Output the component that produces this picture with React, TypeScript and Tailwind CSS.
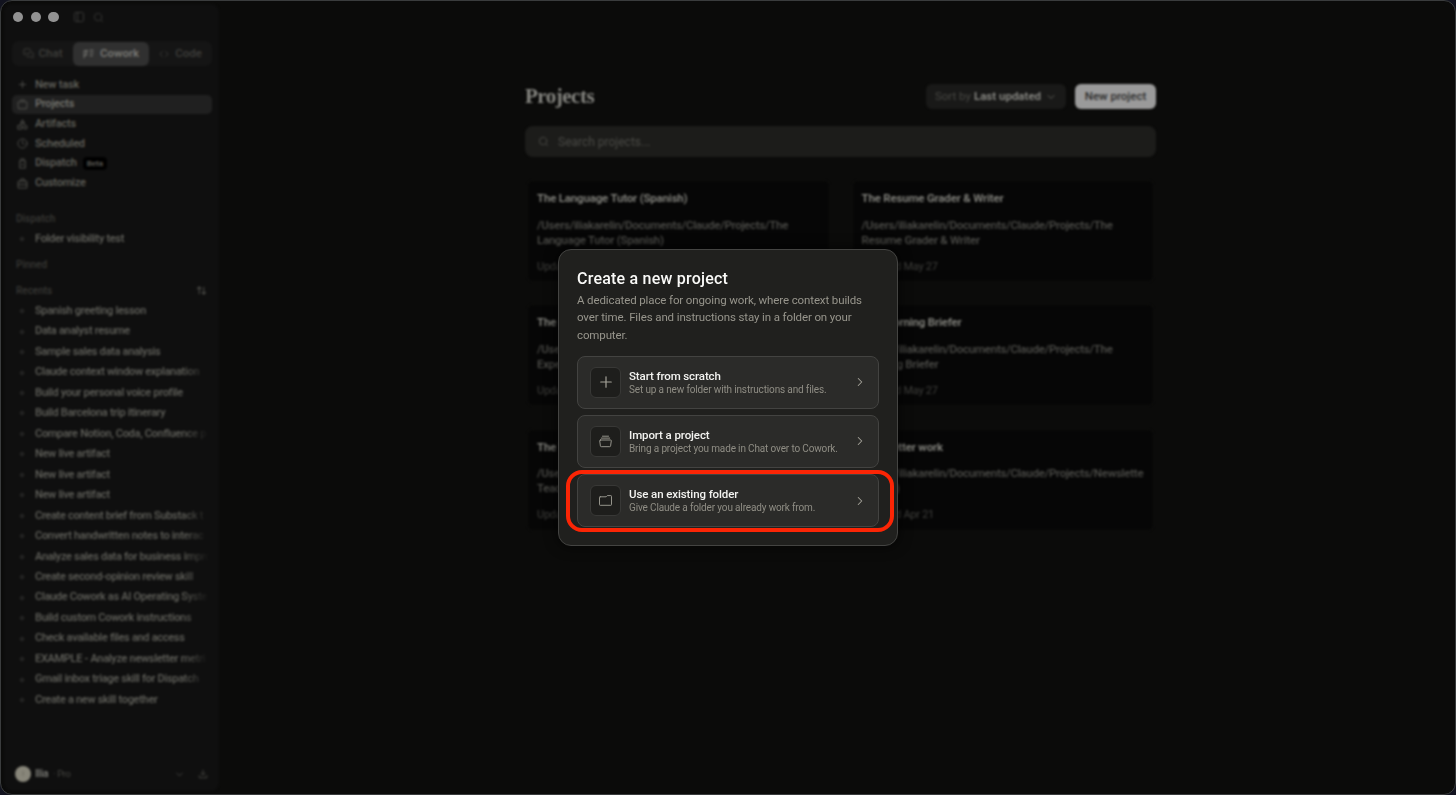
import React from "react";
import {
  ChevronDown,
  ChevronRight,
  Clock,
  Code,
  MessagesSquare,
  PanelLeft,
  Plus,
  Search,
} from "lucide-react";

type IconProps = { size?: number; className?: string };

function StrokeIcon({ size = 11, className, children }: IconProps & { children: React.ReactNode }) {
  return (
    <svg
      width={size}
      height={size}
      viewBox="0 0 12 12"
      fill="none"
      stroke="currentColor"
      strokeWidth="1.1"
      strokeLinecap="round"
      strokeLinejoin="round"
      className={className}
    >
      {children}
    </svg>
  );
}

const BoxIcon = (props: IconProps) => (
  <StrokeIcon {...props}>
    <path d="M3.6 1.2h4.8M2.2 3h7.6a1.2 1.2 0 0 1 1.2 1.2l-.4 5.600a1 1 0 0 1-1 .9H2.400a1 1 0 0 1-1-.9L1 4.200A1.200 1.200 0 0 1 2.200 3z" />
  </StrokeIcon>
);

const ShapesIcon = (props: IconProps) => (
  <StrokeIcon {...props}>
    <path d="M6 1l2.3 4H3.7zM1 7.2h4v3.8H1z" />
    <circle cx="9" cy="9" r="2" />
  </StrokeIcon>
);

const PhoneIcon = (props: IconProps) => (
  <StrokeIcon {...props}>
    <path d="M4 1h4M3 3h6v8H3zM5 7h2" />
  </StrokeIcon>
);

const CaseIcon = (props: IconProps) => (
  <StrokeIcon {...props}>
    <path d="M4 3.5V2a.8.8 0 0 1 .8-.8h2.4A.8.8 0 0 1 8 2v1.5M1.2 4.4a1 1 0 0 1 1-.9h7.6a1 1 0 0 1 1 .9V10a1 1 0 0 1-1 1H2.2a1 1 0 0 1-1-1zM1.2 7h9.6" />
  </StrokeIcon>
);

const CoworkIcon = (props: IconProps) => (
  <StrokeIcon {...props}>
    <path d="M1.2 10.5V8h2.6V2.5M1.2 8V3h4M7.5 2.5h3.700M7.500 5.500h3.700M7.500 8.500h3" />
  </StrokeIcon>
);

const SortIcon = (props: IconProps) => (
  <StrokeIcon {...props}>
    <path d="M3.5 9.5V2M1.5 4l2-2 2 2M8.5 2.5V10M6.5 8l2 2 2-2" />
  </StrokeIcon>
);

const InstallIcon = (props: IconProps) => (
  <StrokeIcon {...props}>
    <path d="M6 1.5v5M3.5 5L6 7.5 8.5 5M1.5 8v2.5h9V8" />
  </StrokeIcon>
);

const navItems = [
  { label: "New task", icon: Plus },
  { label: "Projects", icon: BoxIcon, active: true },
  { label: "Artifacts", icon: ShapesIcon },
  { label: "Scheduled", icon: Clock },
  { label: "Dispatch", icon: PhoneIcon, badge: "Beta" },
  { label: "Customize", icon: CaseIcon },
];

const recents = [
  "Spanish greeting lesson",
  "Data analyst resume",
  "Sample sales data analysis",
  "Claude context window explanation",
  "Build your personal voice profile",
  "Build Barcelona trip itinerary",
  "Compare Notion, Coda, Confluence p",
  "New live artifact",
  "New live artifact",
  "New live artifact",
  "Create content brief from Substack t",
  "Convert handwritten notes to interac",
  "Analyze sales data for business impro",
  "Create second-opinion review skill",
  "Claude Cowork as AI Operating Syste",
  "Build custom Cowork instructions",
  "Check available files and access",
  "EXAMPLE - Analyze newsletter metri",
  "Gmail inbox triage skill for Dispatch",
  "Create a new skill together",
];

const root = "/Users/iliakarelin/Documents/Claude/Projects/";

const projects = [
  { title: "The Language Tutor (Spanish)", path: [root + "The", "Language Tutor (Spanish)"], date: "May 27" },
  { title: "The Resume Grader & Writer", path: [root + "The", "Resume Grader & Writer"], date: "May 27" },
  { title: "The Expert", path: [root + "The", "Expert"], date: "May 27" },
  { title: "The Morning Briefer", path: [root + "The", "Morning Briefer"], date: "May 27" },
  { title: "The Teacher", path: [root + "The", "Teacher"], date: "Apr 21" },
  { title: "Newsletter work", path: [root + "Newslette", "r (work)"], date: "Apr 21" },
];

function ChatRow({ label }: { label: string }) {
  return (
    <div className="flex h-[20.47px] items-center pl-2">
      <span className="size-1 shrink-0 rounded-full border border-[#363634]" />
      <span className="ml-[11px] w-[177px] overflow-hidden whitespace-nowrap text-[11px] font-medium tracking-[-0.3px] text-[#62625c] [mask-image:linear-gradient(to_right,black_84%,transparent_99%)]">
        {label}
      </span>
    </div>
  );
}

function Sidebar() {
  return (
    <aside className="flex w-[215px] shrink-0 flex-col rounded-[8px] bg-[#0f0f0f] px-2">
      <div className="flex h-[26px] items-center gap-[8px] pl-[61px] text-[#373735]">
        <PanelLeft size={12} />
        <Search size={11} />
      </div>

      <div className="mt-[11px] flex h-[25px] w-[200px] items-center rounded-[7px] bg-[#151515] text-[11.5px] font-medium text-[#3f3f3c]">
        <div className="flex w-[61px] items-center justify-center gap-[5px]">
          <MessagesSquare size={11} />
          Chat
        </div>
        <div className="flex h-[24px] w-[76px] items-center justify-center gap-[6px] rounded-[6px] bg-[#303030] font-semibold text-[#777773]">
          <CoworkIcon />
          Cowork
        </div>
        <div className="flex w-[63px] items-center justify-center gap-[6px]">
          <Code size={10} />
          Code
        </div>
      </div>

      <nav className="mt-[9px] w-[200px]">
        {navItems.map(({ label, icon: Icon, active, badge }) => (
          <div
            key={label}
            className={`flex h-[19.7px] items-center rounded-[5px] pl-[5px] text-[11px] font-medium ${
              active ? "bg-[#202020] text-[#777772]" : "text-[#62625c]"
            }`}
          >
            <Icon size={11} className="text-[#4f4f4b]" />
            <span className="ml-[7px] tracking-[-0.2px]">{label}</span>
            {badge && (
              <span className="ml-[6px] rounded-[4px] bg-black px-[4px] text-[8px] leading-[13px] text-[#62625e]">
                {badge}
              </span>
            )}
          </div>
        ))}
      </nav>

      <div className="mt-[18px] flex h-[14px] items-center pl-1 text-[10px] font-medium text-[#383835]">
        Dispatch
      </div>
      <div className="mt-[3.5px]">
        <ChatRow label="Folder visibility test" />
      </div>
      <div className="mt-[8.5px] flex h-[14px] items-center pl-1 text-[10px] font-medium text-[#383835]">
        Pinned
      </div>
      <div className="mt-[12px] flex h-[14px] items-center justify-between pl-1 pr-[4px] text-[10px] font-medium text-[#383835]">
        Recents
        <SortIcon className="text-[#4f4f4b]" />
      </div>
      <div className="mt-[3.3px]">
        {recents.map((label, i) => (
          <ChatRow key={i} label={label} />
        ))}
      </div>

      <div className="mt-auto flex h-[34px] items-center pl-[3px] pr-[3px] text-[#484844]">
        <span className="flex size-4 items-center justify-center rounded-full bg-[#88867a] text-[8px] text-[#66655c]">
          I
        </span>
        <span className="ml-1 text-[11px] font-semibold tracking-[-0.4px] text-[#777772]">Ilia</span>
        <span className="ml-[5px] text-[9.5px] tracking-[-0.4px] text-[#454541]">· Pro</span>
        <ChevronDown size={11} className="ml-auto" />
        <InstallIcon size={10} className="ml-[13px]" />
      </div>
    </aside>
  );
}

function ProjectCard({ title, path, date }: { title: string; path: string[]; date: string }) {
  return (
    <div className="h-[102px] whitespace-nowrap rounded-[7px] border border-[#0f0f0d] bg-[#060606] px-[9px] pt-[9px]">
      <div className="text-[11.5px] font-semibold leading-4 tracking-[-0.18px] text-[#85857f]">{title}</div>
      <div className="mt-[11.5px] text-[11.5px] font-medium leading-[15px] tracking-[-0.24px] text-[#4f4f4b]">
        {path.map((line) => (
          <div key={line}>{line}</div>
        ))}
      </div>
      <div className="mt-[11px] text-[11px] leading-[15px] tracking-[-0.25px] text-[#3f3f3c]">Updated {date}</div>
    </div>
  );
}

function ProjectsPage() {
  return (
    <main className="ml-[306px] mt-[79px] w-[631px]">
      <div className="flex h-[27px] items-center">
        <h1 className="font-['Liberation_Serif',serif] text-[21px] font-bold tracking-[-0.5px] text-[#858580]">
          Projects
        </h1>
        <div className="ml-auto flex h-[25px] w-[140px] items-center justify-center rounded-[6px] bg-[#191918] text-[11.5px] text-[#484844]">
          Sort by
          <span className="ml-[3px] font-semibold text-[#8a8a85]">Last updated</span>
          <ChevronDown size={12} className="ml-[4px] text-[#5c5c58]" />
        </div>
        <div className="ml-[9px] flex h-[25px] w-[81px] items-center justify-center rounded-[6px] bg-[#9a9a9a] text-[11.5px] font-medium text-[#2c2c2c]">
          New project
        </div>
      </div>

      <div className="mt-[16px] flex h-[31px] items-center rounded-[8px] bg-[#1c1c1a] pl-[13px] text-[#4a4a46]">
        <Search size={11} />
        <span className="ml-[9px] text-[12px]">Search projects...</span>
      </div>

      <div className="mt-[23px] grid grid-cols-2 gap-x-[22px] gap-y-[22.4px] px-[2px]">
        {projects.map((p) => (
          <ProjectCard key={p.title} {...p} />
        ))}
      </div>
    </main>
  );
}

function ProjectBoxIcon() {
  return (
    <svg width="13" height="13" viewBox="0 0 13 13" fill="none" stroke="currentColor" strokeLinejoin="round" strokeLinecap="round">
      <path d="M3.5 1.2h6M2.3 3.1h8.4" strokeWidth="0.9" />
      <path d="M1.4 5h10.2a.7.7 0 0 1 .7.8l-.7 5a1 1 0 0 1-1 .9H2.400a1 1 0 0 1-1-.9l-.7-5a.7.7 0 0 1 .7-.8z" strokeWidth="0.9" />
    </svg>
  );
}

function FolderIcon() {
  return (
    <svg width="13" height="13" viewBox="0 0 13 13" fill="none" stroke="currentColor" strokeLinejoin="round" strokeLinecap="round">
      <path d="M1.2 2.8h5.900l1.200-1.200h3.500a.7.7 0 0 1 .7.7v8.300a.7.7 0 0 1-.7.7H1.200a.7.7 0 0 1-.7-.7V3.500a.7.7 0 0 1 .7-.7z" strokeWidth="0.9" />
    </svg>
  );
}

const options = [
  {
    title: "Start from scratch",
    text: "Set up a new folder with instructions and files.",
    icon: <Plus size={18} strokeWidth={1.6} />,
  },
  {
    title: "Import a project",
    text: "Bring a project you made in Chat over to Cowork.",
    icon: <ProjectBoxIcon />,
  },
  {
    title: "Use an existing folder",
    text: "Give Claude a folder you already work from.",
    icon: <FolderIcon />,
    highlighted: true,
  },
];

function CreateProjectDialog() {
  return (
    <div
      role="dialog"
      className="h-[297px] w-[340px] rounded-[13px] border border-[#444442] bg-[#20201e] px-[18px] pt-[19px] shadow-[0_0_12px_2px_rgba(0,0,0,0.5)]"
    >
      <h2 className="whitespace-nowrap text-[16px] font-medium leading-5 tracking-[0.22px] text-[#fafaf8]">
        Create a new project
      </h2>
      <p className="mt-[3.2px] whitespace-nowrap text-[11.5px] leading-[17.5px] tracking-[-0.12px] text-[#97958c]">
        A dedicated place for ongoing work, where context builds
        <br />
        over time. Files and instructions stay in a folder on your
        <br />
        computer.
      </p>
      <div className="mt-[11.6px] flex flex-col gap-[6.2px]">
        {options.map((option) => (
          <button
            key={option.title}
            className="relative flex h-[53px] items-center rounded-[8px] border border-[#434341] bg-[#2b2b29] pl-[12px] pr-[11px] text-left"
          >
            <span className="flex size-[31px] shrink-0 items-center justify-center rounded-[6px] border border-[#383836] bg-[#1e1e1c] text-[#a3a198]">
              {option.icon}
            </span>
            <span className="ml-[8px] flex flex-col whitespace-nowrap">
              <span className="text-[11.5px] font-medium leading-[14px] tracking-[-0.1px] text-[#f3f3f0]">
                {option.title}
              </span>
              <span className="text-[10px] leading-[13px] tracking-[-0.15px] text-[#8f8d84]">{option.text}</span>
            </span>
            <ChevronRight size={14} strokeWidth={1.8} className="ml-auto shrink-0 text-[#a3a198]" />
            {option.highlighted && (
              <span className="absolute -left-[12px] -right-[16px] -top-[5.5px] -bottom-[6px] rounded-[16px] border-4 border-[#fb2505]" />
            )}
          </button>
        ))}
      </div>
    </div>
  );
}

export default function App() {
  return (
    <div className="h-[795px] w-[1456px] overflow-hidden bg-[#12131f] font-['Roboto','Liberation_Sans',sans-serif]">
      <div className="relative h-full overflow-hidden rounded-[12px] border border-[#3a3c3d] bg-[#0b0b0a]">
        <div className="flex h-full p-[3px] blur-[1.3px]">
          <Sidebar />
          <ProjectsPage />
        </div>

        <div className="absolute left-[12px] top-[11px] flex gap-[7.2px]">
          <span className="size-[10.4px] rounded-full bg-[#929292]" />
          <span className="size-[10.4px] rounded-full bg-[#929292]" />
          <span className="size-[10.4px] rounded-full bg-[#929292]" />
        </div>

        <div className="absolute inset-0 flex items-center justify-center pb-px">
          <CreateProjectDialog />
        </div>
      </div>
    </div>
  );
}
